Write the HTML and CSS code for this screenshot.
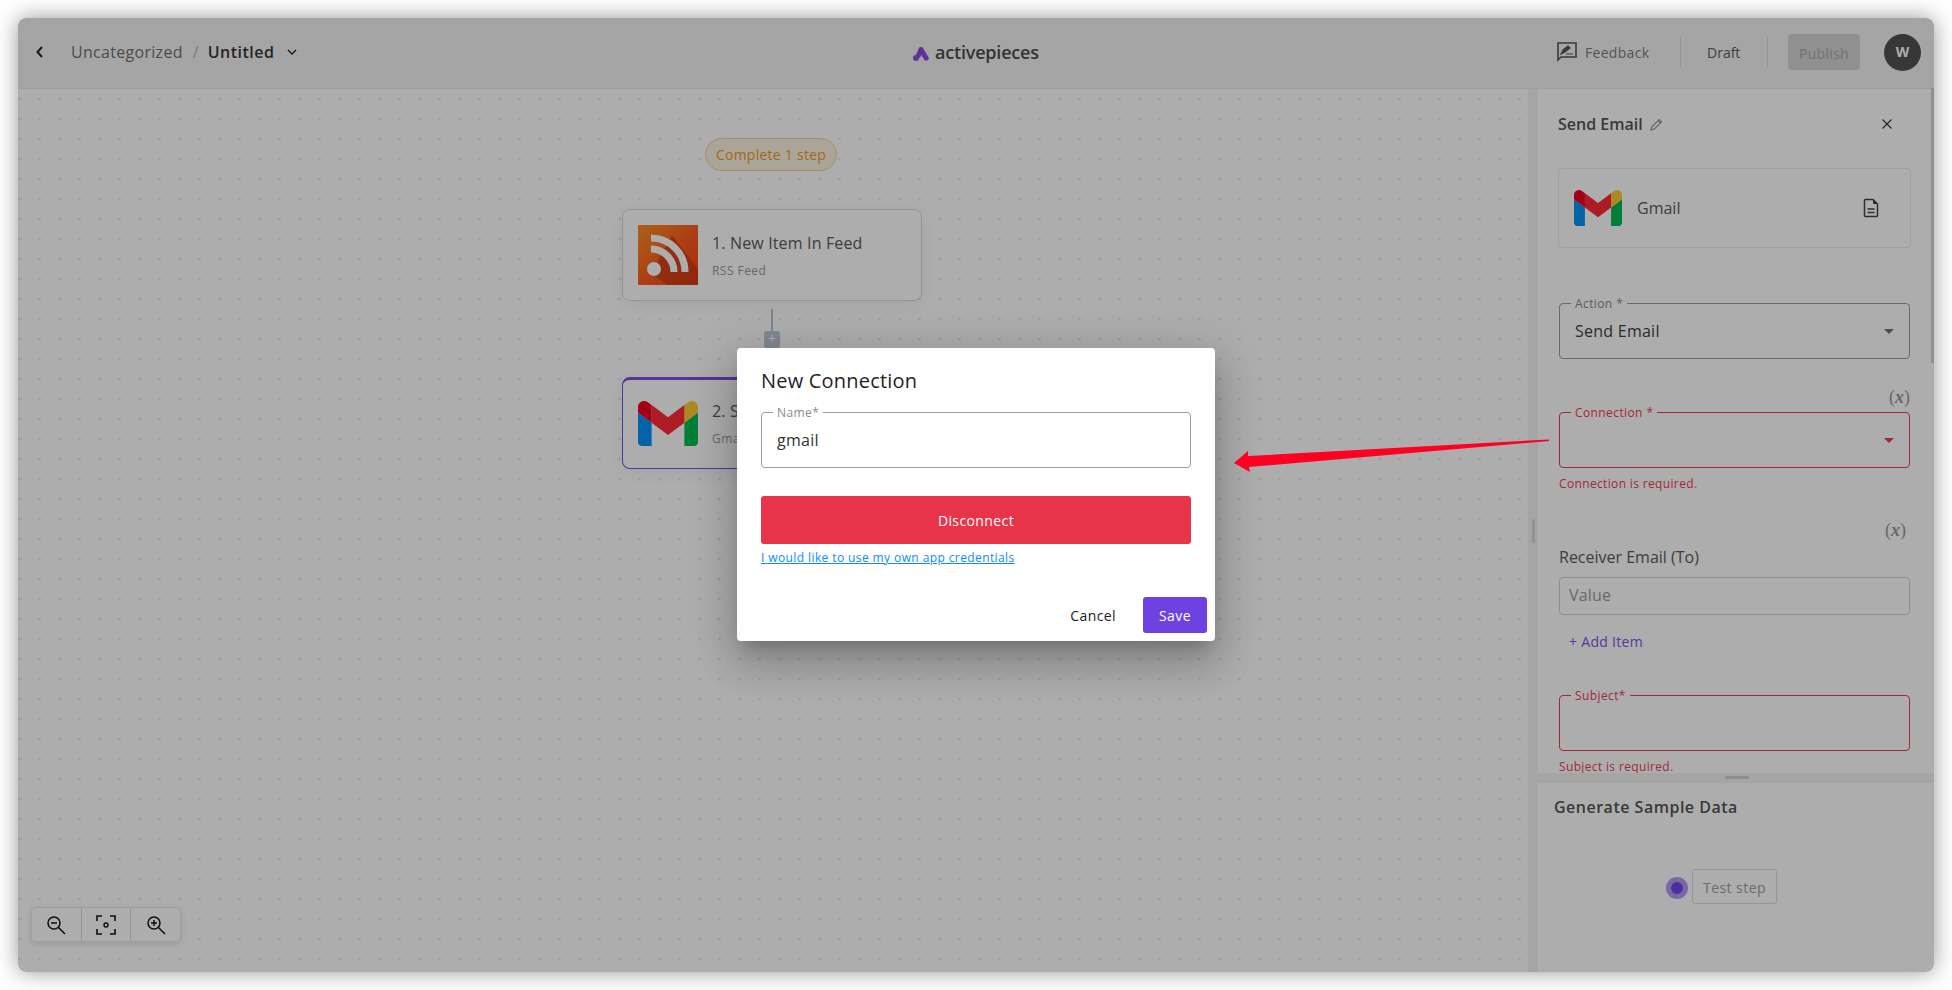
FILE: index.html
```html
<!DOCTYPE html>
<html lang="en">
<head>
<meta charset="utf-8">
<title>Untitled - activepieces</title>
<link rel="stylesheet" href="styles.css">
</head>
<body>
<div class="window">
  <header class="topbar">
    <div class="crumbs">
      <svg class="back" viewBox="0 0 10 14"><path d="M7 2 2.5 7 7 12" fill="none" stroke="#222" stroke-width="2"/></svg>
      <span class="crumb-parent">Uncategorized</span>
      <span class="crumb-sep">/</span>
      <span class="crumb-current">Untitled</span>
      <svg class="crumb-caret" viewBox="0 0 10 6"><path d="M1 1l4 4 4-4" fill="none" stroke="#222" stroke-width="1.4"/></svg>
    </div>
    <div class="logo">
      <svg class="logo-mark" viewBox="0 0 16 14"><path d="M8 2.5 13.200 11.200M8 2.500 5.400 8.500" fill="none" stroke="#8a4ce0" stroke-width="5" stroke-linecap="round"/><circle cx="3" cy="11" r="3" fill="#8a4ce0"/></svg>
      <span class="logo-text">activepieces</span>
    </div>
    <div class="top-actions">
      <svg class="fb-icon" viewBox="0 0 20 20"><path d="M1 1h18v14H4l-3 3z" fill="none" stroke="#555" stroke-width="1.6"/><path d="M4 12l2-4 5-4 2 2-5 4zM9 12h7" fill="#555" stroke="#555" stroke-width="1.2"/></svg>
      <span class="feedback">Feedback</span>
      <span class="vdiv vdiv-a"></span>
      <span class="draft">Draft</span>
      <span class="vdiv vdiv-b"></span>
      <span class="publish">Publish</span>
      <span class="avatar">W</span>
    </div>
  </header>

  <div class="workspace">
    <main class="canvas">
      <div class="pill">Complete 1 step</div>

      <div class="step step-one">
        <svg class="step-icon" viewBox="0 0 60 60">
          <defs><linearGradient id="rssbg" x1="0" y1="0" x2="1" y2="1"><stop offset="0" stop-color="#ff8f26"/><stop offset=".55" stop-color="#ff5a1e"/><stop offset="1" stop-color="#f5431a"/></linearGradient></defs>
          <rect width="60" height="60" fill="url(#rssbg)"/>
          <path d="M13 49 30 60h30V44L34 10z" fill="#c93a16" opacity=".75"/>
          <circle cx="16" cy="44" r="7" fill="#fff"/>
          <path d="M13 24a23 23 0 0 1 23 23" fill="none" stroke="#fff" stroke-width="7"/>
          <path d="M13 13a34 34 0 0 1 34 34" fill="none" stroke="#fff" stroke-width="7"/>
        </svg>
        <div class="step-text">
          <div class="step-title">1. New Item In Feed</div>
          <div class="step-sub">RSS Feed</div>
        </div>
      </div>

      <div class="connector"></div>
      <div class="plus">+</div>

      <div class="step step-two">
        <svg class="gmail-big" viewBox="52 42 88 66">
          <path fill="#0094f5" d="M58 108h14V74L52 59v43c0 3.32 2.69 6 6 6"/>
          <path fill="#00bb55" d="M120 108h14c3.32 0 6-2.69 6-6V59l-20 15"/>
          <path fill="#ffcb36" d="M120 48v26l20-15v-8c0-7.42-8.47-11.65-14.4-7.2"/>
          <path fill="#ff2935" d="M72 74V48l24 18 24-18v26L96 92"/>
          <path fill="#f00020" d="M52 51v8l20 15V48l-5.6-4.2c-5.94-4.45-14.4-.22-14.4 7.2"/>
        </svg>
        <div class="step-text">
          <div class="step-title">2. Send Email</div>
          <div class="step-sub">Gmail</div>
        </div>
      </div>

      <div class="zoom-bar">
        <span class="zoom-cell">
          <svg class="zoom-icon" viewBox="0 0 20 20"><circle cx="8" cy="8" r="6" fill="none" stroke="#161616" stroke-width="1.5"/><path d="M12.5 12.5 19 19M5 8h6" stroke="#161616" stroke-width="1.5"/></svg>
        </span>
        <span class="zoom-cell">
          <svg class="zoom-icon" viewBox="0 0 20 20"><path d="M1 6V1h5M14 1h5v5M19 14v5h-5M6 19H1v-5" fill="none" stroke="#161616" stroke-width="1.6"/><circle cx="10" cy="10" r="2" fill="none" stroke="#161616" stroke-width="1.4"/></svg>
        </span>
        <span class="zoom-cell">
          <svg class="zoom-icon" viewBox="0 0 20 20"><circle cx="8" cy="8" r="6" fill="none" stroke="#161616" stroke-width="1.5"/><path d="M12.5 12.5 19 19M5 8h6M8 5v6" stroke="#161616" stroke-width="1.5"/></svg>
        </span>
      </div>
    </main>

    <div class="v-resizer"><span class="v-handle"></span></div>

    <aside class="panel">
      <span class="scrollthumb"></span>
      <section class="form-area">
        <div class="panel-head">
          <span class="panel-title">Send Email</span>
          <svg class="pencil" viewBox="0 0 14 14"><path d="M1 13l.8-3.2L10 1.5 12.5 4 4.2 12.2zM8.800 2.800l2.400 2.400" fill="none" stroke="#888" stroke-width="1.100"/></svg>
          <svg class="close" viewBox="0 0 10 10"><path d="M.5.5l9 9M9.500.5l-9 9" stroke="#333" stroke-width="1.1"/></svg>
        </div>

        <div class="piece-card">
          <svg class="gmail-small" viewBox="52 42 88 66">
            <path fill="#0094f5" d="M58 108h14V74L52 59v43c0 3.32 2.69 6 6 6"/>
            <path fill="#00bb55" d="M120 108h14c3.32 0 6-2.69 6-6V59l-20 15"/>
            <path fill="#ffcb36" d="M120 48v26l20-15v-8c0-7.42-8.47-11.65-14.4-7.2"/>
            <path fill="#ff2935" d="M72 74V48l24 18 24-18v26L96 92"/>
            <path fill="#f00020" d="M52 51v8l20 15V48l-5.6-4.2c-5.94-4.45-14.4-.22-14.4 7.2"/>
          </svg>
          <span class="piece-name">Gmail</span>
          <svg class="doc" viewBox="0 0 16 20"><path d="M1.500 2.500a1 1 0 0 1 1-1H10l4.500 4.500v11.500a1 1 0 0 1-1 1h-11a1 1 0 0 1-1-1zM4.500 11h7M4.500 14.500h7" fill="none" stroke="#444" stroke-width="1.500"/><path d="M10 1.500 14.500 6H10z" fill="#444"/></svg>
        </div>

        <div class="field field-action">
          <span class="field-label">Action *</span>
          <span class="field-value">Send Email</span>
          <span class="tri"></span>
        </div>

        <div class="fx-row"><span class="fx">(<i>x</i>)</span></div>

        <div class="field field-error">
          <span class="field-label">Connection *</span>
          <span class="tri tri-error"></span>
        </div>
        <div class="error-text">Connection is required<span class="error-dot">.</span></div>

        <div class="fx-row fx-row-b"><span class="fx">(<i>x</i>)</span></div>
        <div class="plain-label">Receiver Email (To)</div>
        <div class="value-input">Value</div>
        <div class="add-item">+ Add Item</div>

        <div class="field field-error field-subject">
          <span class="field-label">Subject*</span>
        </div>
        <div class="error-text error-subject">Subject is required<span class="error-dot">.</span></div>
      </section>

      <div class="h-resizer"><span class="h-handle"></span></div>

      <section class="sample">
        <div class="sample-title">Generate Sample Data</div>
        <div class="test-row">
          <span class="pulse"><span class="pulse-core"></span></span>
          <span class="test-btn">Test step</span>
        </div>
      </section>
    </aside>
  </div>

  <div class="overlay">
    <div class="dialog">
      <h2 class="dialog-title">New Connection</h2>
      <div class="dialog-field">
        <span class="dialog-label">Name*</span>
        <span class="dialog-value">gmail</span>
      </div>
      <div class="disconnect">Disconnect</div>
      <a class="own-app" href="#">I would like to use my own app credentials</a>
      <div class="dialog-actions">
        <span class="cancel">Cancel</span>
        <span class="save">Save</span>
      </div>
    </div>
  </div>

  <svg class="annot-arrow" viewBox="1230 436 322 40"><path d="M1549 439.500 1248 456 1248 451 1234 463 1250 472 1249 467 1549 441z" fill="#ff0022"/></svg>
</div>
</body>
</html>
```
FILE: styles.css
```css
* { box-sizing: border-box; }
html, body { margin: 0; padding: 0; height: 100%; background: #fff; overflow: hidden; }
body { padding: 18px; font-family: "Open Sans", "Liberation Sans", sans-serif; }

.window {
  position: relative;
  width: 1916px;
  height: 954px;
  border-radius: 8px;
  overflow: hidden;
  background: #fff;
  display: flex;
  flex-direction: column;
}
body::before {
  content: "";
  position: absolute;
  left: 18px; top: 18px;
  width: 1916px; height: 954px;
  border-radius: 8px;
  box-shadow: 0 0 22px rgba(0,0,0,.42);
}

/* top bar */
.topbar {
  height: 70px;
  flex: none;
  display: flex;
  align-items: center;
  background: #f4f4f4;
  box-shadow: 0 1px 0 #ebebeb;
  padding-bottom: 2px;
  position: relative;
  z-index: 1;
}
.crumbs { display: flex; align-items: center; padding-left: 17px; flex: 1; }
.back { width: 10px; height: 14px; }
.crumb-parent { margin-left: 26px; font-size: 16px; letter-spacing: .3px; color: #707070; }
.crumb-sep { margin-left: 10px; font-size: 16px; color: #b4b4b4; }
.crumb-current { margin-left: 9px; font-size: 16px; font-weight: 600; letter-spacing: .5px; color: #363636; }
.crumb-caret { margin-left: 13px; width: 10px; height: 6px; }

.logo { position: absolute; left: 895px; top: 22px; display: flex; align-items: center; gap: 6px; }
.logo-mark { width: 16px; height: 14px; margin-top: 3px; }
.logo-text { font-size: 18px; font-weight: 600; color: #4c4c4c; letter-spacing: -.2px; line-height: 24px; }

.top-actions { display: flex; align-items: center; padding-right: 13px; }
.fb-icon { width: 20px; height: 20px; margin-right: 8px; }
.feedback { font-size: 14px; letter-spacing: .3px; color: #7c7c7c; width: 64px; }
.vdiv { width: 1px; height: 30px; background: #dcdcdc; }
.vdiv-a { margin-left: 31px; }
.draft { margin-left: 26px; width: 34px; font-size: 14px; color: #5c5c5c; }
.vdiv-b { margin-left: 26px; }
.publish {
  margin-left: 20px; width: 72px; height: 36px; border-radius: 3px;
  background: #d4d4d4; color: #a8a8a8; font-size: 14px; letter-spacing: .3px;
  display: flex; align-items: center; justify-content: center; padding-top: 2px;
}
.avatar {
  margin-left: 24px; width: 37px; height: 37px; border-radius: 50%;
  background: #525252; color: #fff; font-size: 14px; font-weight: 700;
  display: flex; align-items: center; justify-content: center; padding-bottom: 2px;
}

.workspace { flex: 1; display: flex; min-height: 0; }

/* canvas */
.canvas {
  position: relative;
  width: 1510px;
  flex: none;
  background-color: #fff;
  background-image: radial-gradient(circle at 10px 10px, #e6e6e6 1.2px, transparent 1.7px);
  background-size: 20px 20px;
  background-position: -8.5px 1px;
}
.pill {
  position: absolute; left: 687px; top: 50px; width: 132px; height: 33px;
  border: 1px solid #f5cf8e; border-radius: 17px; background: #fdf3e2;
  color: #f09a1e; font-size: 14px; letter-spacing: .25px;
  display: flex; align-items: center; justify-content: center;
}
.step {
  position: absolute; left: 604px; width: 300px; height: 92px;
  background: #fff; border: 1px solid #d4dbe3; border-radius: 8px;
  display: flex; align-items: center; padding-left: 15px;
  box-shadow: 0 4px 16px rgba(0,0,0,.05);
}
.step-one { top: 121px; }
.step-two { top: 289px; border-color: #7c4ae8; border-top-width: 3px; padding-bottom: 2px; }
.step-icon { width: 60px; height: 60px; flex: none; }
.gmail-big { width: 60px; height: 45px; flex: none; }
.step-text { margin-left: 14px; }
.step-title { font-size: 16px; letter-spacing: .15px; line-height: 22px; color: #5a5a5a; }
.step-sub { margin-top: 9px; font-size: 12px; letter-spacing: .45px; line-height: 16px; color: #9a9a9a; }
.connector { position: absolute; left: 753px; top: 221px; width: 2px; height: 22px; background: #b6c0cb; }
.plus {
  position: absolute; left: 746px; top: 243px; width: 16px; height: 17px; border-radius: 2px;
  background: #bcc8d4; color: #fff; font-size: 14px; line-height: 16px; text-align: center;
}
.zoom-bar {
  position: absolute; left: 13px; top: 819px; width: 150px; height: 35px;
  display: flex; background: #fff; border: 1px solid #ebebeb; border-radius: 4px;
  box-shadow: 0 2px 6px rgba(0,0,0,.12);
}
.zoom-cell { flex: 1; display: flex; align-items: center; justify-content: center; border-right: 1px solid #dcdcdc; }
.zoom-cell:last-child { border-right: 0; }
.zoom-icon { width: 20px; height: 20px; }

/* sidebar */
.v-resizer { width: 10px; flex: none; background: #f4f4f4; position: relative; }
.v-handle { position: absolute; left: 4px; top: 431px; width: 3px; height: 24px; border-radius: 2px; background: #d1d6dc; }
.panel { flex: 1; position: relative; display: flex; flex-direction: column; background: #fff; min-width: 0; }
.scrollthumb { position: absolute; right: 0; top: 0; width: 3px; height: 275px; background: #cfd5dc; z-index: 1; }
.form-area { height: 685px; flex: none; overflow: hidden; padding: 24px 24px 0 21px; }
.panel-head { height: 24px; display: flex; align-items: center; margin-left: -1px; }
.panel-title { font-size: 16px; font-weight: 600; color: #555; }
.pencil { width: 13px; height: 13px; margin-left: 7px; }
.close { width: 10px; height: 10px; margin-left: auto; margin-right: 18px; }
.piece-card {
  margin: 32px -1px 0; height: 80px; border: 1px solid #ececec; border-radius: 4px;
  display: flex; align-items: center; padding-left: 15px;
}
.gmail-small { width: 48px; height: 36px; flex: none; }
.piece-name { margin-left: 15px; font-size: 16px; color: #5a5a5a; }
.doc { width: 16px; height: 20px; margin-left: auto; margin-right: 31px; }

.field { position: relative; height: 56px; border: 1px solid #9c9c9c; border-radius: 4px; display: flex; align-items: center; padding-left: 15px; }
.field-action { margin-top: 55px; }
.field-label {
  position: absolute; left: 11px; top: -6px; padding: 0 4px; background: #fff;
  font-size: 12px; letter-spacing: .4px; line-height: 12px; color: #888;
}
.field-value { font-size: 16px; letter-spacing: .25px; color: #3f3f3f; }
.tri { position: absolute; right: 15px; top: 25px; border-left: 5px solid transparent; border-right: 5px solid transparent; border-top: 5px solid #757575; }
.tri-error { border-top-color: #f23a55; }
.field-error { border-color: #f23a55; margin-top: 5px; }
.field-error .field-label { color: #f23a55; }
.fx-row { margin-top: 28px; height: 20px; display: flex; justify-content: flex-end; }
.fx-row-b { margin-top: 28px; padding-right: 4px; }
.fx { font-family: "Liberation Serif", serif; font-size: 18px; line-height: 20px; color: #999; }
.fx i { font-weight: 700; }
.error-text { margin-top: 8px; height: 16px; font-size: 12px; letter-spacing: .35px; line-height: 16px; color: #f23a55; }
.error-dot { color: #888; }
.plain-label { margin-top: 6px; font-size: 16px; line-height: 22px; color: #5a5a5a; }
.value-input {
  margin-top: 9px; height: 38px; border: 1px solid #d2d2d2; border-radius: 4px;
  padding-left: 9px; font-size: 16px; letter-spacing: .2px; line-height: 34px; color: #999;
}
.add-item { margin-top: 17px; margin-left: 10px; font-size: 14px; letter-spacing: .3px; line-height: 20px; color: #8450f0; }
.field-subject { margin-top: 43px; }
.error-subject { margin-top: 8px; }
.h-resizer { height: 10px; flex: none; background: #f4f4f4; position: relative; }
.h-handle { position: absolute; left: 187px; top: 3px; width: 24px; height: 3px; border-radius: 2px; background: #ccd3db; }
.sample { flex: 1; padding: 12px 0 0 16px; }
.sample-title { font-size: 16px; font-weight: 600; letter-spacing: .5px; line-height: 24px; color: #555; }
.test-row { margin-top: 50px; padding-left: 112px; display: flex; align-items: center; gap: 4px; }
.pulse { width: 22px; height: 22px; border-radius: 50%; background: #b79af5; display: flex; align-items: center; justify-content: center; margin-top: 2px; }
.pulse-core { width: 12px; height: 12px; border-radius: 50%; background: #7048e8; }
.test-btn {
  width: 85px; height: 35px; border: 1px solid #dedede; border-radius: 3px; padding-top: 1px;
  font-size: 14px; letter-spacing: .45px; color: #a0a0a0;
  display: flex; align-items: center; justify-content: center;
}

/* modal */
.overlay {
  position: absolute; inset: 0; z-index: 2; padding-bottom: 1px; background: rgba(0,0,0,.32);
  display: flex; align-items: center; justify-content: center;
}
.dialog {
  width: 478px; height: 293px; background: #fff; border-radius: 4px;
  padding: 18px 8px 8px 24px; display: flex; flex-direction: column;
  box-shadow: 0 11px 15px -7px rgba(0,0,0,.2), 0 24px 38px 3px rgba(0,0,0,.14), 0 9px 46px 8px rgba(0,0,0,.12);
}
.dialog-title { margin: 0; font-size: 20px; font-weight: 500; letter-spacing: .2px; line-height: 30px; color: #1f1f1f; }
.dialog-field {
  position: relative; margin-top: 16px; width: 430px; height: 56px; flex: none;
  border: 1px solid #9e9e9e; border-radius: 4px; display: flex; align-items: center; padding: 0 15px;
}
.dialog-label {
  position: absolute; left: 11px; top: -6px; padding: 0 4px; background: #fff;
  font-size: 12px; letter-spacing: .4px; line-height: 12px; color: #8a8a8a;
}
.dialog-value { font-size: 16px; letter-spacing: .25px; color: #333; }
.disconnect {
  margin-top: 28px; width: 430px; height: 48px; flex: none; border-radius: 3px; background: #e7344b;
  color: #fff; font-size: 14px; letter-spacing: .4px;
  display: flex; align-items: center; justify-content: center;
}
.own-app { margin-top: 6px; align-self: flex-start; font-size: 12px; letter-spacing: .4px; line-height: 16px; color: #0a8cff; text-decoration: underline; }
.dialog-actions { margin-top: auto; display: flex; justify-content: flex-end; align-items: center; gap: 27px; }
.cancel { font-size: 14px; letter-spacing: .4px; color: #222; }
.save {
  width: 64px; height: 36px; border-radius: 3px; background: #6e41e2; color: #fff;
  font-size: 14px; letter-spacing: .4px; display: flex; align-items: center; justify-content: center;
}
.annot-arrow { position: absolute; z-index: 3; left: 1212px; top: 418px; width: 322px; height: 40px; }
```
